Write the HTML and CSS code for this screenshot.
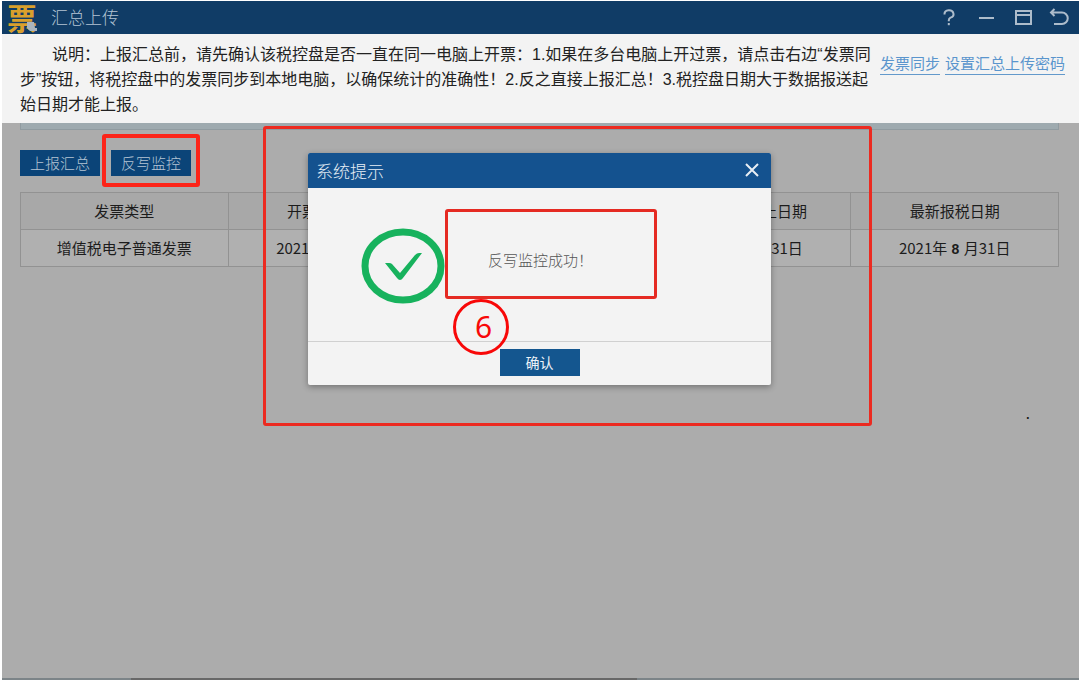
FILE: index.html
```html
<!DOCTYPE html>
<html lang="zh-CN">
<head>
<meta charset="utf-8">
<title>汇总上传</title>
<link rel="stylesheet" href="styles.css">
</head>
<body>
<div class="window">
  <header class="titlebar">
    <span class="logo">票<svg class="logo-doc" viewBox="0 0 12 10" aria-hidden="true"><path d="M1 0h7l1 6h2v3H4L1 6z" fill="#a9b4bf"/></svg></span>
    <h1 class="title">汇总上传</h1>
    <div class="controls">
      <button class="control" type="button" aria-label="帮助"><svg viewBox="0 0 20 20"><path d="M5.500 6.500V6a4.500 3.800 0 1 1 6 3.600q-1.700.9-1.700 2.600v1"/><path d="M9.800 15v2.200"/></svg></button>
      <button class="control" type="button" aria-label="最小化"><svg viewBox="0 0 20 20"><path d="M2 10h15"/></svg></button>
      <button class="control" type="button" aria-label="最大化"><svg viewBox="0 0 20 20"><path d="M3 3h15v13H3zM3 7h15"/></svg></button>
      <button class="control" type="button" aria-label="返回"><svg viewBox="0 0 20 20"><path d="M5.500 1L2 4.500L5.500 8M2 4.500h11a5.500 5.500 0 0 1 0 11.500H5"/></svg></button>
    </div>
  </header>

  <section class="notice">
    <p class="notice-text">说明：上报汇总前，请先确认该税控盘是否一直在同一电脑上开票：1.如果在多台电脑上开过票，请点击右边“发票同<br>步”按钮，将税控盘中的发票同步到本地电脑，以确保统计的准确性！2.反之直接上报汇总！3.税控盘日期大于数据报送起<br>始日期才能上报。</p>
    <nav class="notice-links"><a href="#">发票同步</a><a href="#">设置汇总上传密码</a></nav>
  </section>

  <main class="content">
    <div class="strip"></div>
    <div class="toolbar">
      <button class="button" type="button">上报汇总</button>
      <span class="marked"><button class="button" type="button">反写监控</button></span>
    </div>
    <table class="records">
      <thead>
        <tr><th>发票类型</th><th>开票截止日期</th><th></th><th>数据报送截止日期</th><th>最新报税日期</th></tr>
      </thead>
      <tbody>
        <tr><td>增值税电子普通发票</td><td>2021年 <b>8</b> 月31日</td><td></td><td>2021年 <b>8</b> 月31日</td><td>2021年 <b>8</b> 月31日</td></tr>
      </tbody>
    </table>
    <span class="dot">.</span>
  </main>

  <div class="overlay">
    <section class="dialog" role="dialog" aria-labelledby="dialog-title">
      <header class="dialog-head">
        <h2 class="dialog-title" id="dialog-title">系统提示</h2>
        <button class="close" type="button" aria-label="关闭"><svg viewBox="0 0 16 16"><path d="M2 1l12 12M14 1L2 13"/></svg></button>
      </header>
      <div class="dialog-body">
        <svg class="success" viewBox="0 0 84 76" aria-hidden="true">
          <ellipse cx="42" cy="38" rx="38" ry="34" fill="none" stroke="#17b25d" stroke-width="7"/>
          <path d="M24 35h4q2 0 3 1l8 9 15-18q2-2 4-2h3L42 50q-3 4-6 0z" fill="#17b25d"/>
        </svg>
        <p class="message">反写监控成功！</p>
        <span class="step">6</span>
      </div>
      <footer class="dialog-foot"><button class="button button-ok" type="button">确认</button></footer>
      <div class="frame"></div>
    </section>
  </div>
</div>
</body>
</html>
```
FILE: styles.css
```css
* { box-sizing: border-box; }

body {
  margin: 0;
  background: #fff;
  color: #222;
  font: 15px/20px "Noto Sans CJK SC", sans-serif;
}

button { font: inherit; border: 0; padding: 0; cursor: pointer; }

.window {
  position: relative;
  display: flex;
  flex-direction: column;
  min-height: calc(100vh - 5px);
  margin: 1px 1px 4px 2px;
  background: #acacac;
}

.window::after {
  content: "";
  height: 2px;
  background: linear-gradient(90deg, #7c8488 12%, #686868 12%, #686868 59%, #7c8488 59%);
}

.titlebar {
  display: flex;
  align-items: center;
  height: 33px;
  padding: 0 10px 0 5px;
  background: #103c66;
  color: #b4c4d4;
}

.logo {
  position: relative;
  width: 32px;
  margin-right: 12px;
  color: #d9a02c;
  font-size: 30px;
  font-weight: 700;
  line-height: 32px;
  padding-bottom: 2px;
  white-space: nowrap;
}

.logo-doc { position: absolute; right: 1px; bottom: 3px; width: 12px; height: 10px; }

.title { margin: 0; font-size: 17px; font-weight: 300; line-height: 24px; padding-bottom: 2px; }

.controls { display: flex; gap: 16px; margin-left: auto; }

.control { width: 20px; height: 20px; background: none; }
.control:first-child { margin-right: 2px; }

.control svg {
  display: block;
  fill: none;
  stroke: #adbccb;
  stroke-width: 2;
}

.notice {
  display: flex;
  justify-content: space-between;
  padding: 8px 14px 6px 18px;
  background: #f3f3f3;
}

.notice-text {
  margin: 0;
  font: 16px/25px "Liberation Sans", "Noto Sans CJK SC", sans-serif;
  text-indent: 32px;
  white-space: nowrap;
}

.notice-links { display: flex; gap: 5px; align-items: flex-start; padding-top: 10px; white-space: nowrap; }

.notice-links a {
  border-bottom: 1px solid #6399cb;
  color: #5a95cd;
  line-height: 22px;
  text-decoration: none;
}

.content { position: relative; flex: 1; padding: 0 20px 0 18px; }

.strip {
  height: 7px;
  border: 1px solid #909ba0;
  border-top: 0;
  background: #9eaaaf;
}

.toolbar { display: flex; align-items: baseline; gap: 2px; padding-top: 4px; }

.button {
  width: 80px;
  height: 26px;
  background: #0b4478;
  color: #b5c5d4;
  font-weight: 300;
}

.marked {
  display: flex;
  padding: 12px 5px 7px;
  border: 4px solid #fc2418;
  border-radius: 3px;
}

.records {
  width: 100%;
  margin-top: 5px;
  border-collapse: collapse;
  table-layout: fixed;
  color: #1c1c1c;
}

.records th, .records td {
  height: 37px;
  padding: 0;
  border: 1px solid #929292;
  font-weight: 400;
  text-align: center;
  white-space: nowrap;
}

.records th { background: #a8a8a8; }
.records td { background: #b0b0b0; }
.records b { margin: 0 1px; font: bold 14px "Liberation Sans", sans-serif; }

.dot { position: absolute; right: 49px; top: 280px; color: #111; }

.overlay {
  position: absolute;
  inset: 0;
  display: flex;
  justify-content: center;
  align-items: flex-start;
  padding: 152px 2px 0 0;
}

.dialog {
  position: relative;
  width: 463px;
  background: #f3f3f3;
  border-radius: 2px;
  box-shadow: 0 2px 6px #0005;
}

.dialog-head {
  display: flex;
  justify-content: space-between;
  align-items: center;
  height: 35px;
  padding: 0 11px 0 8px;
  border-radius: 2px 2px 0 0;
  background: #14528f;
  color: #e6eef5;
}

.dialog-title { margin: 0; font-size: 17px; font-weight: 300; }

.close { width: 16px; height: 16px; background: none; }
.close svg { display: block; fill: none; stroke: #e8eef4; stroke-width: 2; }

.dialog-body {
  position: relative;
  display: flex;
  align-items: flex-start;
  padding: 21px 114px 37px 53px;
}

.success { flex: none; width: 84px; height: 76px; margin-top: 19px; }

.message {
  flex: 1;
  margin: 0;
  padding: 38px 0 26px 40px;
  border: 3px solid #e52a22;
  border-radius: 3px;
  color: #555;
  font-weight: 300;
}

.step {
  position: absolute;
  left: 145px;
  top: 111px;
  width: 56px;
  height: 56px;
  padding-left: 5px;
  border: 3px solid #f80808;
  border-radius: 50%;
  color: #f80808;
  font: 30px/50px "Noto Sans", sans-serif;
  text-align: center;
}

.dialog-foot { display: flex; justify-content: center; padding: 7px 0 9px; border-top: 1px solid #d0d0d0; }

.button-ok { height: 27px; padding-bottom: 2px; background: #14568f; color: #eef3f8; font-size: 14px; font-weight: 400; }

.frame {
  position: absolute;
  inset: -27px -101px -41px -45px;
  border: 3px solid #ec2a20;
  border-radius: 3px;
  pointer-events: none;
}
```
